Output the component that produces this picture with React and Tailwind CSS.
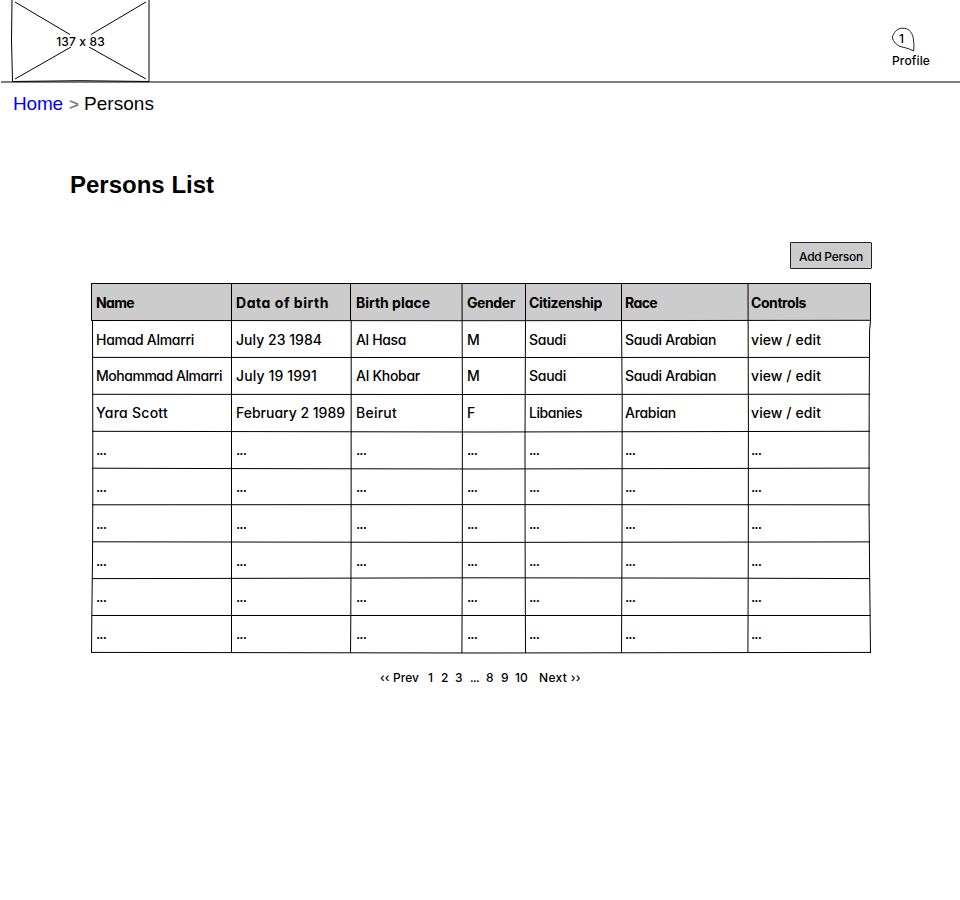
import { useLayoutEffect, useRef, useState } from 'react';

// Text whose tracking is adjusted so that it spans the given width.
function Fit({ w, children, className = '' }) {
  const ref = useRef(null);
  const [spacing, setSpacing] = useState(0);
  useLayoutEffect(() => {
    const natural = ref.current.getBoundingClientRect().width;
    setSpacing((w - natural) / Math.max(1, children.length));
  }, []);
  return (
    <span
      ref={ref}
      className={`inline-block whitespace-pre ${className}`}
      style={{ letterSpacing: `${spacing}px` }}
    >
      {children}
    </span>
  );
}

const columns = [
  ['Name', 38], ['Data of birth', 93], ['Birth place', 74], ['Gender', 48],
  ['Citizenship', 73], ['Race', 32], ['Controls', 55],
];

const people = [
  [['Hamad Almarri', 98], ['July 23 1984', 86], ['Al Hasa', 50], ['M', 13], ['Saudi', 37], ['Saudi Arabian', 91], ['view / edit', 70]],
  [['Mohammad Almarri', 126], ['July 19 1991', 81], ['Al Khobar', 64], ['M', 13], ['Saudi', 37], ['Saudi Arabian', 91], ['view / edit', 70]],
  [['Yara Scott', 72], ['February 2 1989', 109], ['Beirut', 41], ['F', 9], ['Libanies', 53], ['Arabian', 51], ['view / edit', 70]],
];

const grid = 'grid grid-cols-[140px_120px_111px_62px_96px_126px_123px]';

const rules = [
  'M91.5 283.5H870.5', 'M91.5 320.5L480 320.7L870.5 320.3',
  'M92 357.4L480 357.5L870 357.4', 'M92 394.3L480 394.5L870 394.2',
  'M92 431.3L480 432L870 431.3', 'M92 468.2L200 468.5L480 469L870 468.1',
  'M92 504.8L480 504.6L870 504.8', 'M92 541.8L480 542.4L870 541.9',
  'M92 578.6L180 578.5L480 577.8L700 578.1L870 578.6', 'M92 615.5H870.5', 'M91.5 652.4L480 653L870.5 652.4',
  'M91.5 283V320.5L92.5 321L92.8 430L92.8 500L92.5 560L91.9 610L91.5 653',
  'M231.5 283V653', 'M350.5 283V320L351.2 321L351.1 540L350.8 620L350.5 653',
  'M462 283L462.4 400L462.3 560L461.9 653', 'M525.5 283V320L525 440L525.1 540L525.5 653',
  'M621.5 283V320L622.2 400L622 540L621.5 653', 'M748 283L748.4 420L748.3 550L747.9 653',
  'M870.5 283V320.5L869.6 330L869.2 400L869 500L869.6 570L870.5 653',
];

export default function App() {
  return (
    <div className="h-[900px] w-[960px] overflow-hidden bg-white font-['Inter','Noto_Sans',sans-serif] font-medium text-black [font-feature-settings:'cv11']">
      <header className="relative flex h-[82px] justify-between">
        <svg className="pointer-events-none absolute inset-0" width="960" height="84" fill="none" stroke="black">
          <path d="M1 82H960" />
          <path d="M12 0L11.5 40L12.5 81.5L80 80.7L149 81.5V0" />
          <path d="M15 2L70 34.5M146 2L91 34.5M15 79L71 47M146 79L89 47" />
        </svg>
        <div className="ml-3 flex w-[137px] justify-center pt-[34px] text-xs leading-4">
          <Fit w={50}>137 x 83</Fit>
        </div>
        <div className="mr-[28px] flex w-[40px] flex-col pt-[27px] text-xs">
          <div className="relative h-[25px] pl-[7px] pt-1 leading-4">
            <svg className="absolute -left-px top-0" width="26" height="26" fill="none" stroke="#222">
              <path d="M22.7 24Q23.5 18 22.2 10.5C20.5 4 17 1 11 1.2C5.5 1.4 3 6 1.2 10C2 15 6 18 9 19.5C13 20.5 17 21 22.7 24Z" />
            </svg>
            1
          </div>
          <div className="pt-px leading-4"><Fit w={38}>Profile</Fit></div>
        </div>
      </header>

      <nav className="flex h-[43px] items-center gap-[6px] pl-[13px] pt-[2px] font-['Liberation_Sans',Arial,sans-serif] text-[19px] font-normal">
        <a className="text-[#0000ff]"><Fit w={50}>Home</Fit></a>
        <span className="w-[9px] text-[17px] font-bold text-[#808080]">&gt;</span>
        <Fit w={70}>Persons</Fit>
      </nav>

      <main>
        <h1 className="mt-[44px] pl-[70px] font-['Liberation_Sans',Arial,sans-serif] text-2xl font-bold leading-8">Persons List</h1>
        <div className="mt-[41px] flex justify-end pr-[88px]">
          <button className="flex h-[27px] w-[82px] items-center justify-center rounded-[1px] border border-[#222] bg-[#cccccc] pt-[3px] text-xs leading-4">
            <Fit w={64}>Add Person</Fit>
          </button>
        </div>

        <section className="ml-[91px] mt-[14px] w-[779px]">
          <div className={`${grid} h-[37px] bg-[#cccccc] pt-[10px] text-[14px] font-bold leading-5`}>
            {columns.map(([text, w]) => (
              <div key={text} className="pl-[5px]"><Fit w={w}>{text}</Fit></div>
            ))}
          </div>
          {people.map((row, r) => (
            <div key={r} className={`${grid} h-[37px] text-[14px] leading-5 ${r ? 'pt-[9px]' : 'pt-[10px]'}`}>
              {row.map(([text, w], c) => (
                <div key={c} className="pl-[5px]"><Fit w={w}>{text}</Fit></div>
              ))}
            </div>
          ))}
          {[37, 37, 37, 36, 37, 37].map((h, r) => (
            <div key={r} className={`${grid} ${h === 36 ? 'h-9' : 'h-[37px]'} pt-[9px] text-[14px] leading-5`}>
              {columns.map(([text]) => (
                <div key={text} className="pl-[5px]"><Fit w={10}>...</Fit></div>
              ))}
            </div>
          ))}
        </section>

        <div className="mt-[18px] flex pl-[380px] text-xs leading-4">
          <div className="w-[48px]"><Fit w={39}>‹‹ Prev</Fit></div>
          <div className="w-[13px]">1</div>
          <div className="w-[14px]">2</div>
          <div className="w-[15px]">3</div>
          <div className="w-4"><Fit w={9}>...</Fit></div>
          <div className="w-[15px]">8</div>
          <div className="w-[14px]">9</div>
          <div className="w-[24px]">10</div>
          <div><Fit w={42}>Next ››</Fit></div>
        </div>
      </main>

      <svg className="pointer-events-none absolute left-0 top-0" width="960" height="900" fill="none" stroke="black">
        {rules.map((d) => <path key={d} d={d} />)}
      </svg>
    </div>
  );
}
